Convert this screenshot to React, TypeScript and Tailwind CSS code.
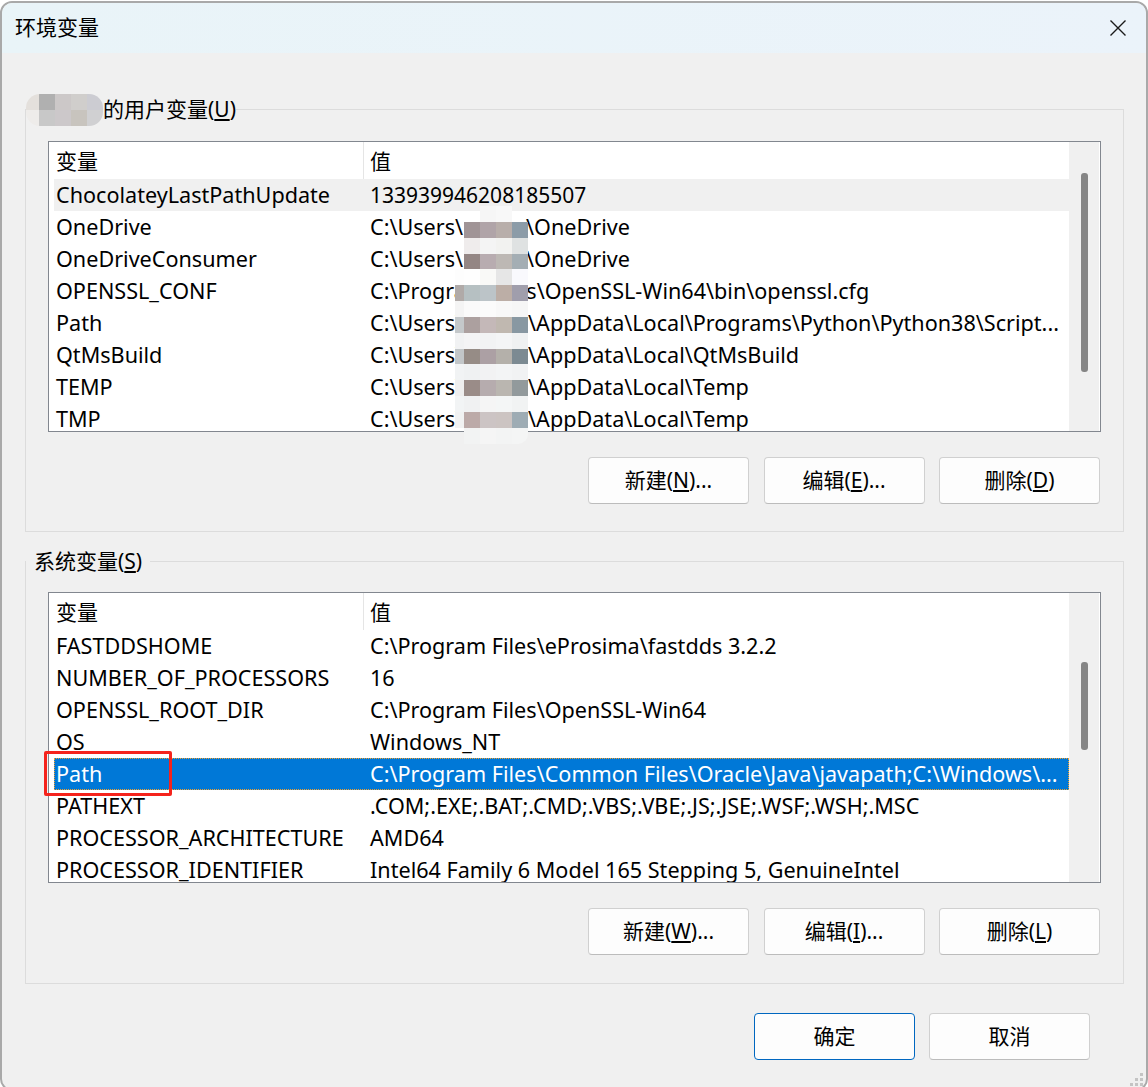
import React from "react";

const font = "font-['Noto_Sans','Noto_Sans_CJK_SC',sans-serif]";

type Row = { name: string; value: React.ReactNode; active?: boolean; selected?: boolean; digits?: boolean };

const Hidden = ({ w }: { w: string }) => <span className={`inline-block ${w}`} />;

const userRows: Row[] = [
  { name: "ChocolateyLastPathUpdate", value: "133939946208185507", active: true, digits: true },
  { name: "OneDrive", value: <>C:\Users\<Hidden w="w-[63px]" />\OneDrive</> },
  { name: "OneDriveConsumer", value: <>C:\Users\<Hidden w="w-[63px]" />\OneDrive</> },
  { name: "OPENSSL_CONF", value: "C:\\Program Files\\OpenSSL-Win64\\bin\\openssl.cfg" },
  { name: "Path", value: <>C:\Users\<Hidden w="w-[65px]" />\AppData\Local\Programs\Python\Python38\Script...</> },
  { name: "QtMsBuild", value: <>C:\Users\<Hidden w="w-[65px]" />\AppData\Local\QtMsBuild</> },
  { name: "TEMP", value: <>C:\Users\<Hidden w="w-[65px]" />\AppData\Local\Temp</> },
  { name: "TMP", value: <>C:\Users\<Hidden w="w-[65px]" />\AppData\Local\Temp</> },
];

const systemRows: Row[] = [
  { name: "FASTDDSHOME", value: "C:\\Program Files\\eProsima\\fastdds 3.2.2" },
  { name: "NUMBER_OF_PROCESSORS", value: "16" },
  { name: "OPENSSL_ROOT_DIR", value: "C:\\Program Files\\OpenSSL-Win64" },
  { name: "OS", value: "Windows_NT" },
  { name: "Path", value: "C:\\Program Files\\Common Files\\Oracle\\Java\\javapath;C:\\Windows\\...", selected: true },
  { name: "PATHEXT", value: ".COM;.EXE;.BAT;.CMD;.VBS;.VBE;.JS;.JSE;.WSF;.WSH;.MSC" },
  { name: "PROCESSOR_ARCHITECTURE", value: "AMD64" },
  { name: "PROCESSOR_IDENTIFIER", value: "Intel64 Family 6 Model 165 Stepping 5, GenuineIntel" },
];

// mosaic over the user name in the value column, dark and light bands take turns
const mosaicBands = [
  ["bg-transparent", "bg-transparent", "bg-[#f6f6f6]", "bg-[#f8f8f8]", "bg-transparent"],
  ["bg-transparent", "bg-[#a09496]", "bg-[#b0a4a8]", "bg-[#b8aeaa]", "bg-[#8c9ca8]"],
  ["bg-transparent", "bg-[#efecec]", "bg-[#f4f4f4]", "bg-[#f2f2f0]", "bg-[#dfe2e2]"],
  ["bg-transparent", "bg-[#948684]", "bg-[#b8acb0]", "bg-[#bdb8b4]", "bg-[#a4aeb4]"],
  ["bg-[#fdfdfd]", "bg-[#fefefe]", "bg-[#f9f9f7]", "bg-[#e6e6e6]", "bg-[#f9f9fd]"],
  ["bg-[#b0aaa8]", "bg-[#b6c0c2]", "bg-[#bcc4c8]", "bg-[#bcaea6]", "bg-[#a09eac]"],
  ["bg-[#f4f4f4]", "bg-[#fafafa]", "bg-[#fbfbfb]", "bg-[#f8f8f8]", "bg-[#f6f6f6]"],
  ["bg-[#c4c8ca]", "bg-[#aca09f]", "bg-[#c4b8b8]", "bg-[#c0b8b0]", "bg-[#8898a2]"],
  ["bg-[#f1f2f3]", "bg-[#f4f4f5]", "bg-[#f2f3f4]", "bg-[#f4f5f6]", "bg-[#eff1f2]"],
  ["bg-[#c2c6c8]", "bg-[#968c86]", "bg-[#aca0a4]", "bg-[#b4b0aa]", "bg-[#7c8a92]"],
  ["bg-[#f1f3f4]", "bg-[#eff1f2]", "bg-[#f2f2f3]", "bg-[#f3f4f5]", "bg-[#f1f2f3]"],
  ["bg-[#eeeeee]", "bg-[#9a8c88]", "bg-[#b6acae]", "bg-[#bab6b0]", "bg-[#929a9c]"],
  ["bg-[#f2f4f5]", "bg-[#f0f1f2]", "bg-[#f5f5f5]", "bg-[#f4f6f6]", "bg-[#f1f3f3]"],
  ["bg-[#f1f2f2]", "bg-[#bcaaa8]", "bg-[#ccc4c4]", "bg-[#ccc4c2]", "bg-[#9eacb4]"],
  ["bg-transparent", "bg-[#f2f3f3]", "bg-[#f5f5f5]", "bg-[#f3f4f4]", "bg-[#f4f5f5]"],
];

const legendMosaic = [
  ["bg-[#e4e0dc]", "bg-[#b0b0b0]", "bg-[#ccc8c8]", "bg-[#d0cecc]", "bg-[#ccccd2]"],
  ["bg-[#eeecea]", "bg-[#c8c8c8]", "bg-[#ccc8ca]", "bg-[#c8c4be]", "bg-[#d0d0d2]"],
];

function ListView({ rows, thumb }: { rows: Row[]; thumb: string }) {
  return (
    <div className="flex h-[291px] w-[1053px] overflow-hidden border border-[#82878f] bg-white">
      <div className="flex min-w-0 flex-1 flex-col pl-[5px]">
        <div className="flex h-[37px] shrink-0 items-center">
          <div className="flex h-full w-[310px] items-center border-r border-[#e5e5e5] pl-[2px] pt-[2px]">变量</div>
          <div className="pl-[6px] pt-[2px]">值</div>
        </div>
        {rows.map((r) => (
          <div
            key={r.name}
            className={`flex h-8 shrink-0 items-center whitespace-nowrap text-[21.6px] ${
              r.selected ? "bg-[#0078d7] text-white outline-1 -outline-offset-1 outline-dotted outline-[#f0a030]" : ""
            } ${r.active ? "bg-[#f0f0f0]" : ""}`}
          >
            <div className="w-[310px] pl-[2px]">{r.name}</div>
            <div className={`min-w-0 flex-1 overflow-hidden pl-[6px] ${r.digits ? "pt-[2px] text-[21px]" : ""}`}>{r.value}</div>
          </div>
        ))}
      </div>
      <div className="flex w-[31px] shrink-0 justify-center border-r border-white bg-[#f0f0f0] pl-[1px]">
        <div className={`w-[7px] rounded-[3px] bg-[#858585] ${thumb}`} />
      </div>
    </div>
  );
}

function Btn({ children, primary }: { children: React.ReactNode; primary?: boolean }) {
  return (
    <button
      className={`flex h-[47px] w-[161px] items-center justify-center rounded-[4px] border bg-[#fdfdfd] ${
        primary ? "border-[#0067c0]" : "border-[#d0d0d0] border-b-[#bcbcbc]"
      }`}
    >
      {children}
    </button>
  );
}

function Group({ legend, children }: { legend: React.ReactNode; children: React.ReactNode }) {
  return (
    <fieldset className="h-[438px] w-[1099px] border border-[#dcdcdc] pl-[22px]">
      <legend className="-ml-[22px] flex h-[30px] items-center leading-[30px]">{legend}</legend>
      {children}
    </fieldset>
  );
}

export default function App() {
  return (
    <div className={`h-[1087px] w-[1148px] overflow-hidden bg-white pt-[1px] text-[21px] text-black ${font}`}>
      <div className="relative h-[1090px] w-[1148px] overflow-hidden rounded-[12px] border-2 border-[#a9a9a9] bg-[#f0f0f0]">
        <div className="flex h-[50px] items-center justify-between bg-gradient-to-r from-[#e9f4f8] to-[#ebf3fa] pl-[13px] pr-[20px]">
          <span>环境变量</span>
          <svg width="16" height="16" viewBox="0 0 16 16" stroke="#1a1a1a" strokeWidth="1.4">
            <path d="M0.5 0.5 L15.5 15.5 M15.5 0.5 L0.5 15.5" />
          </svg>
        </div>

        <div className="px-[23px] pt-[41px]">
          <Group
            legend={
              <>
                <span className="mt-[2px] inline-block h-[32px] w-[77px] shrink-0 overflow-hidden rounded-[14px] blur-[0.5px]">
                  <span className="grid h-[32px] grid-cols-[13px_repeat(4,16px)]">
                    {legendMosaic.flat().map((c, i) => (
                      <span key={i} className={c} />
                    ))}
                  </span>
                </span>
                <span>的用户变量(<u>U</u>)</span>
              </>
            }
          >
            <div className="pt-[17px]">
              <ListView rows={userRows} thumb="mt-[31px] h-[199px]" />
            </div>
            <div className="mt-[25px] flex justify-end gap-[14.5px] pr-[23px]">
              <Btn>新建(<u>N</u>)...</Btn>
              <Btn>编辑(<u>E</u>)...</Btn>
              <Btn>删除(<u>D</u>)</Btn>
            </div>
          </Group>

          <div className="h-[14px]" />

          <Group legend={<span className="px-[8px]">系统变量(<u>S</u>)</span>}>
            <div className="pt-[16px]">
              <ListView rows={systemRows} thumb="mt-[69px] h-[88px]" />
            </div>
            <div className="mt-[25px] flex justify-end gap-[14.5px] pr-[23px]">
              <Btn>新建(<u>W</u>)...</Btn>
              <Btn>编辑(<u>I</u>)...</Btn>
              <Btn>删除(<u>L</u>)</Btn>
            </div>
          </Group>

          <div className="mt-[29px] flex justify-end gap-[14px] pr-[33px]">
            <Btn primary>确定</Btn>
            <Btn>取消</Btn>
          </div>
        </div>

        {/* blurred user name */}
        <div className="absolute left-[453px] top-[203px] grid w-[73px] grid-cols-[9px_repeat(4,16px)] overflow-hidden rounded-[10px]">
          {mosaicBands.flat().map((c, i) => (
            <div key={i} className={`h-[15.85px] ${c}`} />
          ))}
        </div>

        {/* red annotation box */}
        <div className="absolute left-[42px] top-[748px] h-[45px] w-[128px] rounded-[2px] border-[3px] border-[#f5231c]" />

        {/* resize grip */}
        <svg className="absolute bottom-[2px] right-[2px]" width="14" height="14" viewBox="0 0 14 14" fill="#c4c4c4">
          <rect x="10" y="0" width="3" height="3" />
          <rect x="5" y="5" width="3" height="3" />
          <rect x="10" y="5" width="3" height="3" />
          <rect x="0" y="10" width="3" height="3" />
          <rect x="5" y="10" width="3" height="3" />
          <rect x="10" y="10" width="3" height="3" />
        </svg>
      </div>
    </div>
  );
}
